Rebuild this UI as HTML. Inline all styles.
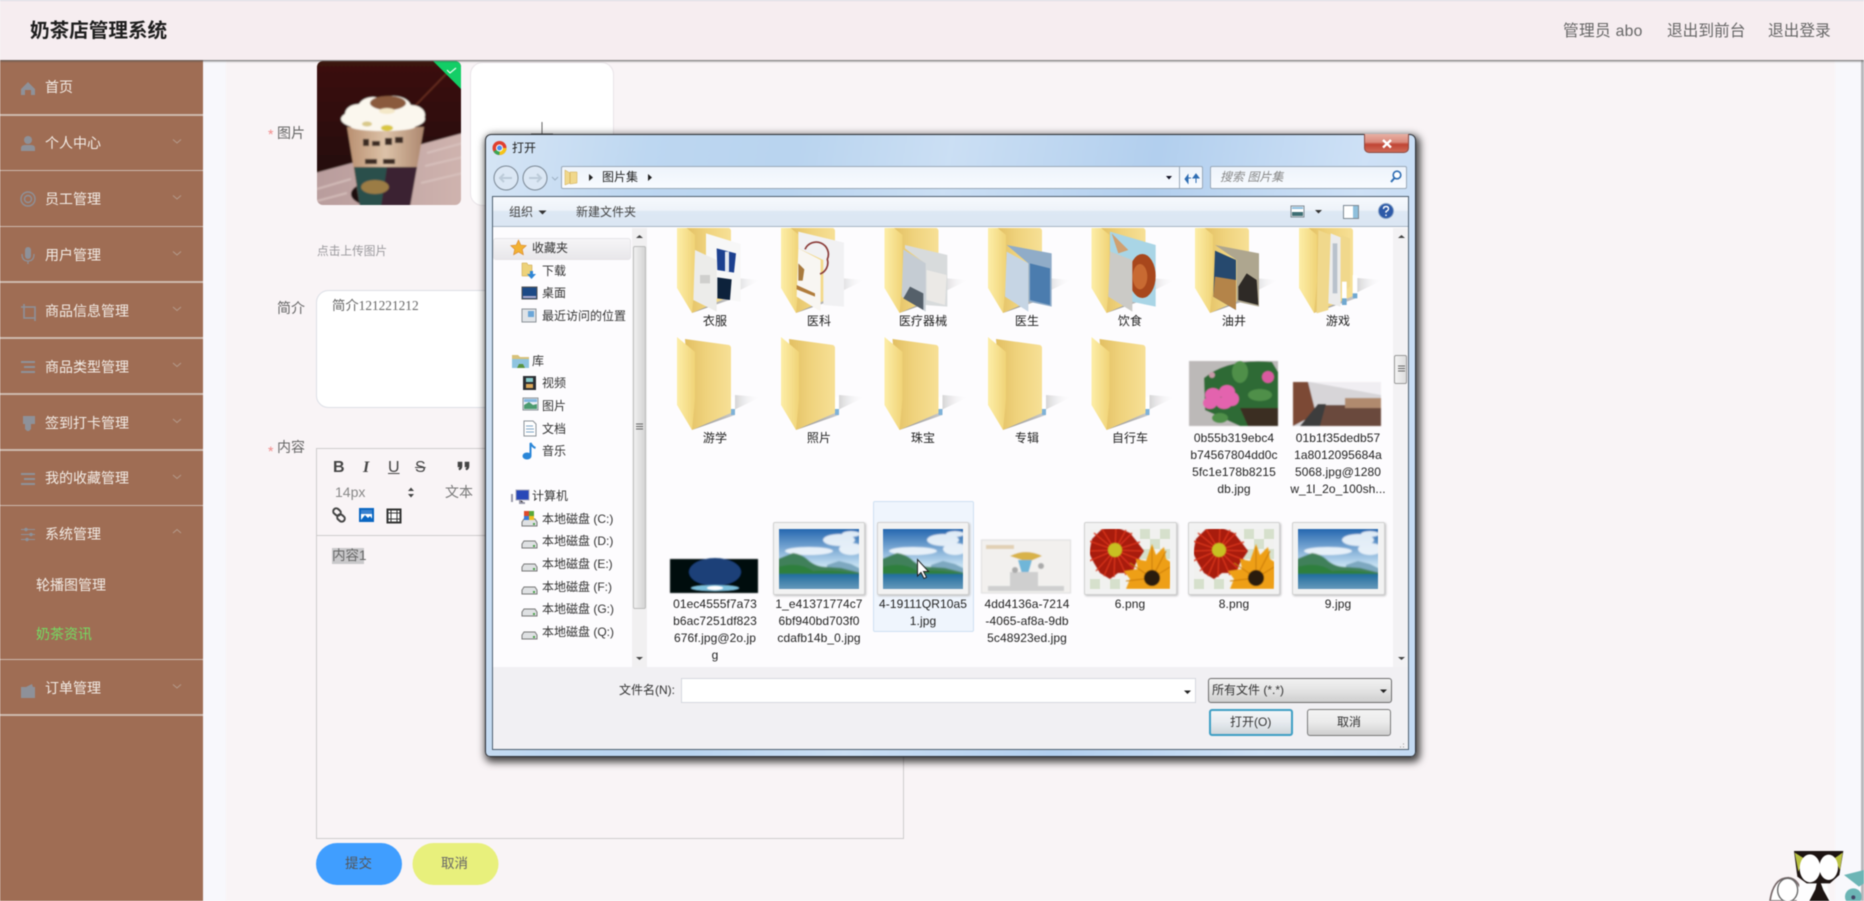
<!DOCTYPE html>
<html lang="zh"><head><meta charset="utf-8"><title>奶茶店管理系统</title>
<style>
*{box-sizing:border-box}
html,body{margin:0;padding:0}
body{width:1864px;height:901px;overflow:hidden;position:relative;background:#f8f8fc;font-family:"Liberation Sans","Noto Sans CJK SC",sans-serif;color:#333}
#root{position:absolute;left:0;top:0;width:1864px;height:901px;overflow:hidden;filter:blur(.45px)}
.a{position:absolute}
.t{position:absolute;white-space:nowrap}
.m{position:absolute;left:45px;white-space:nowrap;font-size:14px;line-height:20px;color:#f3ece6}
.s{position:absolute;left:0;width:203px;height:1.5px;background:#cdb9ae}
.n{position:absolute;white-space:nowrap;font-size:12px;line-height:16px;color:#333}
.l{position:absolute;width:104px;text-align:center;font-size:12px;line-height:17px;color:#222;word-break:break-all;white-space:normal;letter-spacing:.08px}
.frame{position:absolute;background:#f2f2f2;border:1px solid #d2d2d2;border-radius:2px;box-shadow:1px 1px 2px #bbb}
svg{position:absolute;left:0;top:0;overflow:visible}
</style></head><body><div id="root">

<!-- page -->
<div class="a" style="left:226px;top:60px;width:1609px;height:841px;background:#f9f4f6"></div>
<div class="a" style="left:1861px;top:60px;width:3px;height:841px;background:#b8b8bc"></div>
<div class="a" style="left:0;top:0;width:1864px;height:60px;background:#f6edf0;border-top:1px solid #d9d8e2;box-shadow:0 1px 2px #555;z-index:3"></div>
<div class="t" style="left:30px;top:17px;font-size:19.6px;line-height:28px;font-weight:700;color:#1d1d1d;z-index:4">奶茶店管理系统</div>
<div class="t" style="left:1563px;top:20.500px;font-size:15.7px;line-height:22px;color:#666;z-index:4;letter-spacing:.3px">管理员 abo</div>
<div class="t" style="left:1667px;top:20.500px;font-size:15.7px;line-height:22px;color:#666;z-index:4">退出到前台</div>
<div class="t" style="left:1768px;top:20.500px;font-size:15.7px;line-height:22px;color:#666;z-index:4">退出登录</div>

<!-- sidebar -->
<div class="a" style="left:0;top:60px;width:203px;height:841px;background:#9f6d54"></div>
<div class="s" style="top:114px"></div><div class="s" style="top:169.5px"></div><div class="s" style="top:225.5px"></div><div class="s" style="top:281px"></div><div class="s" style="top:337px"></div><div class="s" style="top:393px"></div><div class="s" style="top:449px"></div><div class="s" style="top:504.5px"></div><div class="s" style="top:658.5px"></div><div class="s" style="top:714px"></div>
<div class="m" style="top:77px">首页</div>
<div class="m" style="top:133px">个人中心</div>
<div class="m" style="top:189px">员工管理</div>
<div class="m" style="top:245px">用户管理</div>
<div class="m" style="top:301px">商品信息管理</div>
<div class="m" style="top:356.500px">商品类型管理</div>
<div class="m" style="top:412.500px">签到打卡管理</div>
<div class="m" style="top:468px">我的收藏管理</div>
<div class="m" style="top:524px">系统管理</div>
<div class="m" style="top:575px;left:36px">轮播图管理</div>
<div class="m" style="top:624px;left:36px;color:#74dc62">奶茶资讯</div>
<div class="m" style="top:678px">订单管理</div>

<svg width="1864" height="901" viewBox="0 0 1864 901">
 <defs>
  <filter id="b" x="-10%" y="-10%" width="120%" height="120%"><feGaussianBlur stdDeviation=".7"/></filter>
  <filter id="b2" x="-10%" y="-10%" width="120%" height="120%"><feGaussianBlur stdDeviation=".45"/></filter>
 </defs>
 <!-- sidebar icons -->
 <g fill="#8e9199" stroke="none">
  <path d="M28 82 L35 89 V95 H31 V90 H25 V95 H21 V89Z"/>
  <circle cx="28" cy="140" r="4"/><path d="M21 151v-3q0-3 4-3h6q4 0 4 3v3z"/>
  <g fill="none" stroke="#8e9199" stroke-width="1.4"><circle cx="28" cy="199" r="7"/><circle cx="28" cy="199" r="3.5"/></g>
  <rect x="25" y="247" width="6" height="12" rx="3"/><path d="M22 254q0 7 6 7t6-7M28 261v3" fill="none" stroke="#8e9199" stroke-width="1.3"/>
  <path d="M24 304v14h11M21 307h14v14" fill="none" stroke="#8e9199" stroke-width="1.6"/>
  <path d="M21 361h14v2H21zM24 366h11v2H24zM21 371h14v2H21z"/>
  <path d="M23 416h12v8h-4v5l-2 2h-2l-2-2v-5h-2z"/>
  <path d="M21 473h14v2H21zM24 478h11v2H24zM21 483h14v2H21z"/>
  <path d="M21 529h14v1H21zM21 534h14v1H21zM21 539h14v1H21z"/><circle cx="26" cy="529.5" r="1.7"/><circle cx="31" cy="534.5" r="1.7"/><circle cx="27" cy="539.5" r="1.7"/>
  <path d="M21 687l5 0 6-3 1 3h2v11H21z"/>
 </g>
 <g fill="none" stroke="#b59a8b" stroke-width="1">
  <path d="M173 139.5l4 3.5 4-3.5M173 195.5l4 3.5 4-3.5M173 251.5l4 3.5 4-3.5M173 307l4 3.5 4-3.5M173 363l4 3.5 4-3.5M173 419l4 3.5 4-3.5M173 475l4 3.5 4-3.5M173 533l4-3.5 4 3.5M173 684.5l4 3.5 4-3.5"/>
 </g>

 <!-- uploaded picture -->
 <g transform="translate(317,61)">
  <defs><clipPath id="ci"><rect width="144" height="144" rx="6"/></clipPath>
  <linearGradient id="cup" x1="0" y1="0" x2="1" y2="0"><stop offset="0" stop-color="#b98f70"/><stop offset=".5" stop-color="#dcc2a8"/><stop offset="1" stop-color="#ad876e"/></linearGradient>
  <linearGradient id="tb" x1="0" y1="0" x2="1" y2="0"><stop offset="0" stop-color="#b89c9c"/><stop offset="1" stop-color="#cfb3ae"/></linearGradient>
  <linearGradient id="wl" x1="0" y1="0" x2="0" y2="1"><stop offset="0" stop-color="#3c120d"/><stop offset=".6" stop-color="#2a0907"/><stop offset="1" stop-color="#1c0605"/></linearGradient></defs>
  <g clip-path="url(#ci)"><g filter="url(#b)">
   <rect x="-2" y="-2" width="148" height="148" fill="url(#wl)"/>
   <path d="M-2 112L146 72V146H-2Z" fill="url(#tb)"/>
   <path d="M110 92L146 82M108 105L146 96M104 122L146 112M0 128L34 118M0 140L30 132" stroke="#dcc6c2" stroke-width="2" fill="none" opacity=".7"/>
   <ellipse cx="62" cy="133" rx="28" ry="13" fill="#1c0908"/>
   <path d="M96 47L130 12" stroke="#6b2f20" stroke-width="1.6"/>
   <path d="M30 66H107L93 146H43Z" fill="url(#cup)"/>
   <path d="M37 106H100L93 146H43Z" fill="#3a2030"/>
   <path d="M37 106H70L64 146H43Z" fill="#2a4f4c"/>
   <ellipse cx="58" cy="126" rx="14" ry="7" fill="#9b7b44"/>
   <g fill="#3a2a22"><rect x="46" y="78" width="6" height="7"/><rect x="55" y="80" width="8" height="5"/><rect x="68" y="77" width="7" height="7"/><rect x="78" y="76" width="8" height="6"/><rect x="48" y="98" width="12" height="5"/><rect x="66" y="98" width="12" height="5"/></g>
   <g fill="#fbf7ee"><ellipse cx="66" cy="58" rx="42" ry="12"/><ellipse cx="42" cy="53" rx="14" ry="10"/><ellipse cx="56" cy="47" rx="15" ry="11"/><ellipse cx="76" cy="46" rx="18" ry="11"/><ellipse cx="94" cy="54" rx="14" ry="10"/><ellipse cx="66" cy="66" rx="32" ry="4"/></g>
   <ellipse cx="71" cy="42" rx="18" ry="7" fill="#8a5a3c"/><ellipse cx="70" cy="50" rx="8" ry="3" fill="#f4e8c8"/>
   <ellipse cx="70" cy="67" rx="6" ry="3" fill="#d9c63f"/><ellipse cx="50" cy="63" rx="5" ry="2.5" fill="#d9c98a"/>
  </g>
   <path d="M116 0H144V28Z" fill="#13ce66"/>
   <path d="M130 9l3 3 6-5" stroke="#e8fff0" fill="none" stroke-width="1.2"/>
  </g>
 </g>
 <!-- upload box -->
 <rect x="470.5" y="62.5" width="143" height="143" rx="12" fill="#fff" stroke="#e9e4e8"/>
 <path d="M542 122v22M531 134h22" stroke="#666" stroke-width="1"/>

 <!-- textarea -->
 <rect x="316.5" y="290.5" width="586" height="117" rx="12" fill="#fff" stroke="#dcdfe6"/>
 <!-- editor -->
 <rect x="316.5" y="448.5" width="587" height="390" fill="none" stroke="#cfcccd"/>
 <path d="M317 535.5H903" stroke="#cfcccd"/>
 <path d="M458 462h4v4q0 3-2.500 4l-.7-1.300q1.300-.7 1.200-1.700h-2zM465 462h4v4q0 3-2.500 4l-.7-1.300q1.300-.7 1.200-1.700h-2z" fill="#444" stroke="#444" stroke-width=".6"/>
 <path d="M408 491l3-3.500 3 3.500zM408 494l3 3.500 3-3.500z" fill="#444"/>
 <g fill="none" stroke="#444" stroke-width="2"><rect x="333" y="509" width="8" height="6" rx="3" transform="rotate(40 337 512)"/><rect x="337" y="515" width="8" height="6" rx="3" transform="rotate(40 341 518)"/></g>
 <rect x="360" y="509" width="13" height="12" fill="#fff" stroke="#0a66c2" stroke-width="2"/><path d="M361 520l4-5 3 3 2-2 3 4z" fill="#0a66c2"/><rect x="361" y="510" width="11" height="4" fill="#3b82cf"/>
 <rect x="387.500" y="509.500" width="13" height="13" fill="#fff" stroke="#333" stroke-width="2"/><path d="M387 513h14M387 519h14M391 509v14M397 509v14" stroke="#333" stroke-width="1"/>
 <rect x="332" y="548" width="32" height="16" fill="#c9c8ca"/>
 <rect x="316" y="843" width="86" height="42" rx="21" fill="#409eff"/>
 <rect x="412.500" y="843" width="86" height="42" rx="21" fill="#e8f07c"/>

 <!-- cat -->
 <g transform="translate(1600,780) scale(.33333)">
  <path d="M510 363q10-70 55-70 40 5 40 70z" fill="#fff" stroke="#77686a" stroke-width="5"/>
  <path d="M590 363l10-60h80l10 60z" fill="#fdfdfe"/>
  <path d="M582 213H730L718 285 690 310H620L592 290Z" fill="#1d1412"/>
  <path d="M584 218L612 235 595 275ZM728 218L703 235 720 270Z" fill="#b9c142"/>
  <ellipse cx="630" cy="265" rx="31" ry="42" fill="#fff"/><ellipse cx="686" cy="262" rx="28" ry="38" fill="#fff"/>
  <path d="M655 290l15 40 18 33h-60l18-35z" fill="#1d1412"/>
  <ellipse cx="563" cy="330" rx="30" ry="35" fill="#fff" stroke="#666" stroke-width="4"/>
  <path d="M732 285l60-15v40l-15 10z" fill="#6cb5b5"/><circle cx="760" cy="350" r="25" fill="#6cb5b5"/><circle cx="760" cy="352" r="6" fill="#446"/>
 </g>
</svg>

<!-- form text -->
<div class="t" style="left:268px;top:124px;font-size:14px;line-height:20px;color:#f28a8a">*</div>
<div class="t" style="left:277px;top:123px;font-size:14px;line-height:20px;color:#666">图片</div>
<div class="t" style="left:317px;top:243px;font-size:11.7px;line-height:17px;color:#9a999d">点击上传图片</div>
<div class="t" style="left:277px;top:298px;font-size:14px;line-height:20px;color:#666">简介</div>
<div class="t" style="left:332px;top:297px;font-family:'Liberation Serif','Noto Sans CJK SC',serif;font-size:13.33px;line-height:18px;color:#666">简介121221212</div>
<div class="t" style="left:268px;top:441px;font-size:14px;line-height:20px;color:#f28a8a">*</div>
<div class="t" style="left:277px;top:437px;font-size:14px;line-height:20px;color:#666">内容</div>
<div class="t" style="left:333px;top:458px;font-size:16px;font-weight:700;line-height:20px;color:#444">B</div>
<div class="t" style="left:363px;top:458px;font-size:16px;font-weight:700;font-style:italic;line-height:20px;color:#444;font-family:'Liberation Serif',serif">I</div>
<div class="t" style="left:388px;top:458px;font-size:16px;line-height:20px;color:#444;text-decoration:underline">U</div>
<div class="t" style="left:415px;top:458px;font-size:16px;line-height:20px;color:#444;text-decoration:line-through">S</div>
<div class="t" style="left:335px;top:482px;font-size:14px;line-height:20px;color:#888">14px</div>
<div class="t" style="left:445px;top:482px;font-size:14px;line-height:20px;color:#777">文本</div>
<div class="t" style="left:332px;top:546px;font-size:13.500px;line-height:20px;color:#666">内容1</div>
<div class="t" style="left:345px;top:854px;font-size:13.500px;line-height:20px;color:#555">提交</div>
<div class="t" style="left:441px;top:854px;font-size:13.500px;line-height:20px;color:#666">取消</div>

<!-- dialog -->
<div class="a" style="left:485px;top:134px;width:931px;height:623px;border-radius:6px 6px 5px 5px;border:1px solid #2c3036;box-shadow:2px 3px 8px 2px rgba(0,0,0,.75);background:linear-gradient(100deg,#d6e5f5 0%,#bdd7f1 16%,#b9d4ef 30%,#cbdff4 45%,#b2cfee 65%,#cee1f6 85%,#c3daf3 100%)"></div>
<div class="a" style="left:492px;top:196px;width:917px;height:554px;border:1px solid #4d5e6e;background:#fdfcfe"></div>
<div class="a" style="left:493px;top:197px;width:915px;height:30px;background:linear-gradient(#f6f9fd 0,#eef3f9 45%,#dde8f4 50%,#dbe6f3 100%);border-bottom:1px solid #a8b6c4"></div>
<div class="a" style="left:493px;top:667px;width:915px;height:82px;background:#f1f0f3"></div>
<div class="a" style="left:561px;top:166px;width:642px;height:23px;background:linear-gradient(#eef4fb,#f8fbff);border:1px solid #9aa9b9;border-radius:2px"></div>
<div class="a" style="left:1210px;top:166px;width:197px;height:23px;background:linear-gradient(#eef4fb,#f8fbff);border:1px solid #9aa9b9;border-radius:2px"></div>
<div class="a" style="left:1179px;top:167px;width:1px;height:21px;background:#9aa9b9"></div>
<div class="a" style="left:1364px;top:134px;width:45px;height:19px;border-radius:0 0 5px 5px;background:linear-gradient(#e8b0a4 0,#d98a7c 45%,#c04434 58%,#cf6a58 100%);border:1px solid #8c4c44;border-top:0"></div>
<div class="a" style="left:632px;top:228px;width:15px;height:439px;background:#f1f0f1"></div>
<div class="a" style="left:633px;top:246px;width:13px;height:363px;background:linear-gradient(90deg,#f0f0f0,#d4d4d4);border:1px solid #bcbcbc;border-radius:2px"></div>
<div class="a" style="left:1393px;top:228px;width:15px;height:439px;background:#f3f2f4"></div>
<div class="a" style="left:1394px;top:355px;width:13px;height:29px;background:linear-gradient(90deg,#f4f4f4,#dedede);border:1px solid #9a9a9a;border-radius:2px"></div>
<div class="a" style="left:493px;top:238px;width:138px;height:22px;background:linear-gradient(#f6f5f7,#e8e7ea);border:1px solid #e6e5e8;border-radius:3px"></div>
<div class="a" style="left:873px;top:501px;width:101px;height:131px;background:#eff5fd;border:1px solid #cfe0f2;border-radius:2px"></div>
<div class="a" style="left:681px;top:678px;width:515px;height:25px;background:#fff;border:1px solid #d5d8de"></div>
<div class="a" style="left:1208px;top:678px;width:184px;height:25px;border:1px solid #6c6c6c;border-radius:3px;background:linear-gradient(#f2f2f2,#e3e3e3 50%,#cfcfcf)"></div>
<div class="a" style="left:1209px;top:709px;width:84px;height:27px;border:2px solid #3e9fc4;border-radius:3px;background:linear-gradient(#f3f5f7,#e7ebef 50%,#cfd5da)"></div>
<div class="a" style="left:1307px;top:709px;width:84px;height:27px;border:1px solid #7a7a7a;border-radius:3px;background:linear-gradient(#f3f3f3,#ebebeb 50%,#cfcfcf)"></div>

<!-- thumb frames -->
<div class="frame" style="left:773px;top:522px;width:92px;height:73px"></div>
<div class="frame" style="left:877px;top:522px;width:92px;height:73px"></div>
<div class="frame" style="left:1084px;top:522px;width:93px;height:73px"></div>
<div class="frame" style="left:1188px;top:522px;width:92px;height:73px"></div>
<div class="frame" style="left:1292px;top:522px;width:93px;height:73px"></div>

<svg width="1864" height="901" viewBox="0 0 1864 901">
 <defs>
  <clipPath id="fa"><rect x="650" y="228" width="743" height="439"/></clipPath>
  <linearGradient id="fb" x1="0" y1="0" x2="1" y2="0"><stop offset="0" stop-color="#e2bf62"/><stop offset=".45" stop-color="#efd27c"/><stop offset="1" stop-color="#f7e096"/></linearGradient>
  <linearGradient id="ff" x1="0" y1="0" x2="1" y2="0"><stop offset="0" stop-color="#fdeea8"/><stop offset="1" stop-color="#f0d377"/></linearGradient>
  <linearGradient id="sh" x1="0" y1="0" x2="1" y2="0"><stop offset="0" stop-color="#8e8e8e"/><stop offset=".55" stop-color="#c4c4c4"/><stop offset="1" stop-color="#fdfcfe" stop-opacity="0"/></linearGradient>
  <linearGradient id="sky" x1="0" y1="0" x2="0" y2="1"><stop offset="0" stop-color="#1f63ad"/><stop offset=".6" stop-color="#c4e0f2"/></linearGradient>
  <linearGradient id="sea" x1="0" y1="0" x2="0" y2="1"><stop offset="0" stop-color="#1f6c9e"/><stop offset="1" stop-color="#6a9cbc"/></linearGradient>
  <symbol id="folder" viewBox="0 0 90 96" width="90" height="96" overflow="visible">
   <path d="M15 93L58 78V58L84 60Z" fill="url(#sh)"/>
   <path d="M8 2L52 8Q54 9 54 11V76L15 93Z" fill="url(#fb)"/>
   <rect x="54" y="60" width="4" height="18" fill="#fff"/><rect x="54" y="72" width="4" height="6" fill="#7fb2d8"/>
   <path d="M0 0L18 15V62L15 93L0 68Z" fill="url(#ff)"/>
  </symbol>
  <symbol id="land" viewBox="0 0 80 60" width="80" height="60">
   <g filter="url(#b)">
   <rect x="-1" y="-1" width="82" height="62" fill="url(#sky)"/>
   <g fill="#f2f8fd" opacity=".9"><ellipse cx="60" cy="11" rx="16" ry="6"/><ellipse cx="72" cy="20" rx="12" ry="6"/><ellipse cx="30" cy="22" rx="24" ry="4"/><ellipse cx="72" cy="5" rx="9" ry="3"/></g>
   <path d="M48 36L60 32 72 35 82 40V46H48Z" fill="#7da8c0"/>
   <path d="M-1 30L14 24Q22 25 28 30Q36 38 48 38L62 39 82 44V46H-1Z" fill="#40805a"/>
   <path d="M-1 38Q20 32 34 42Q50 40 82 45V47H-1Z" fill="#2f7f3e"/>
   <rect x="-1" y="45" width="82" height="16" fill="url(#sea)"/>
   </g>
  </symbol>
  <symbol id="flower" viewBox="0 0 80 60" width="80" height="60">
   <rect width="80" height="60" fill="#f1f1ef"/>
   <g fill="#d6e0cc"><rect x="50" width="10" height="10"/><rect x="70" width="10" height="10"/><rect x="60" y="10" width="10" height="10"/><rect x="50" y="20" width="10" height="10"/><rect x="70" y="20" width="10" height="10"/><rect y="50" width="10" height="10"/><rect x="20" y="50" width="10" height="10"/></g>
   <g filter="url(#b2)">
   <path d="M26-2L40 4 48 14 54 22 46 34 42 44 28 44 20 50 10 44 4 34 -1 24 2 10 12 0Z" fill="#a81a10"/>
   <g stroke="#d8341c" stroke-width="1.300"><path d="M25 21L4 4M25 21L0 22M25 21L6 42M25 21L24 48M25 21L44 40M25 21L52 22M25 21L42 4M25 21L26-1M25 21L12 0M25 21L-1 12M25 21L-1 32M25 21L14 47M25 21L36 46M25 21L50 31M25 21L50 13M25 21L36 1"/></g>
   <circle cx="25" cy="21" r="7" fill="#c8c020"/>
   <path d="M62 15L66 26 74 18 76 30 82 34 80 60H36L40 50 34 42 48 40 46 30 56 32Z" fill="#ee9f12"/>
   <g stroke="#c97a08" stroke-width="1"><path d="M62 49L62 18M62 49L76 22M62 49L80 38M62 49L40 34M62 49L36 52"/></g>
   <circle cx="62" cy="49" r="8" fill="#2b1a10"/>
   </g>
  </symbol>
 </defs>
 <g clip-path="url(#fa)">
  <use href="#folder" x="677" y="220"/><use href="#folder" x="781" y="220"/><use href="#folder" x="884.500" y="220"/><use href="#folder" x="988" y="220"/><use href="#folder" x="1091.500" y="220"/><use href="#folder" x="1195" y="220"/><use href="#folder" x="1299" y="220"/>
  <use href="#folder" x="677" y="337"/><use href="#folder" x="781" y="337"/><use href="#folder" x="884.500" y="337"/><use href="#folder" x="988" y="337"/><use href="#folder" x="1091.500" y="337"/>
  <g transform="translate(480,120) scale(.33333)" filter="url(#b2)">
   <path d="M678 340L782 372V545L678 530Z" fill="#f7f7f7"/>
   <path d="M710 385L768 400 762 458 712 450Z" fill="#1b3f8f"/><path d="M735 395h12v60h-12z" fill="#e4e8f0"/><path d="M712 472L755 478 750 540 712 535Z" fill="#10203a"/>
   <path d="M645 390L710 420V575L640 540Z" fill="#ececea"/>
   <path d="M660 465h30v25h-30z" fill="#cfcfcd"/>
   <path d="M955 335L1092 368V560L1030 555V420L955 385Z" fill="#f1f1f3"/>
   <path d="M955 385L1022 420V575L950 530Z" fill="#f8f6f2"/>
   <path d="M975 388a36 36 0 0 1 67 30a36 36 0 0 1-22 44" fill="none" stroke="#8a3a38" stroke-width="5"/>
   <path d="M955 430l18 18-5 34-13 0z" fill="#a87a3c"/><path d="M950 495l55 25v10l-55-22z" fill="#b07c3a"/>
   <path d="M1275 375L1402 405V560L1335 555V430L1275 385Z" fill="#d8dbdc"/>
   <path d="M1340 450L1400 465 1395 555 1340 540Z" fill="#ebe9e6"/>
   <path d="M1270 388L1337 430V575L1265 530Z" fill="#c5ccd3"/><path d="M1290 500L1330 520V570L1270 535Z" fill="#55606a"/>
  </g>
  <g transform="translate(960,120) scale(.33333)" filter="url(#b2)">
   <path d="M140 375L275 400V560L205 545V430Z" fill="#90acc8"/><path d="M210 430L270 445V555L210 540Z" fill="#4c7cae"/>
   <path d="M140 395L205 430V575L135 530Z" fill="#c6d5e4"/>
   <path d="M450 335L587 375V560L515 545V420L450 395Z" fill="#a9d5e6"/>
   <ellipse cx="547" cy="468" rx="40" ry="66" fill="#a8471e"/><ellipse cx="540" cy="470" rx="22" ry="38" fill="#c86a30"/><path d="M455 340l50 50-30 10z" fill="#d0a070"/>
   <path d="M450 395L517 420V575L445 530Z" fill="#cbcac6"/>
   <path d="M765 375L897 400V560L830 545V420Z" fill="#aea68f"/><path d="M835 500l25-40 30 20 5 75-60-15z" fill="#2f2a25"/>
   <path d="M765 392L828 420V570L760 530Z" fill="#26496e"/><path d="M765 470L828 480V570L760 530Z" fill="#b48448"/>
   <path d="M1075 330L1112 345 1105 570 1070 580Z" fill="#f0d88c"/>
   <path d="M1112 340L1142 352V560L1105 550Z" fill="#ececec"/><path d="M1118 370h14v150h-14z" fill="#b9c2cc"/>
   <path d="M1142 345L1170 355V500L1142 520Z" fill="#f0d88c"/>
   <rect x="1146" y="485" width="14" height="70" fill="#fff"/><rect x="1146" y="535" width="14" height="20" fill="#6fa8d0"/>
   <rect x="1178" y="465" width="14" height="70" fill="#fff"/><rect x="1178" y="520" width="14" height="15" fill="#6fa8d0"/>
  </g>
  <!-- pink flower -->
  <g filter="url(#b2)">
   <rect x="1189" y="361" width="89" height="65" fill="#bcb9b8"/>
   <path d="M1204 378Q1228 358 1272 362L1278 372V426H1240L1205 410Z" fill="#2f6a35"/>
   <path d="M1240 408h38v18h-30z" fill="#3a2d20"/>
   <g fill="#4f8f4a"><ellipse cx="1240" cy="372" rx="8" ry="11"/><ellipse cx="1260" cy="395" rx="12" ry="6"/><ellipse cx="1220" cy="418" rx="8" ry="5"/></g>
   <g fill="#e364ae"><ellipse cx="1213" cy="395" rx="8" ry="7"/><ellipse cx="1210" cy="403" rx="7" ry="6"/><ellipse cx="1227" cy="392" rx="8" ry="7"/><ellipse cx="1232" cy="399" rx="7" ry="7"/><ellipse cx="1224" cy="403" rx="8" ry="6"/></g>
   <circle cx="1268" cy="377" r="6" fill="#d95aa0"/><circle cx="1212" cy="375" r="3" fill="#c89aa8"/>
  </g>
  <!-- room -->
  <g filter="url(#b2)">
   <rect x="1293" y="382" width="88" height="44" fill="#d7d5d8"/>
   <path d="M1293 382h15l8 32 -23 12z" fill="#7c4a34"/>
   <path d="M1310 382L1381 395V382Z" fill="#f0eef2"/>
   <path d="M1322 405h59v21h-59l-8 0z" fill="#6a4a3c"/>
   <rect x="1345" y="398" width="36" height="10" fill="#b08a6e"/>
   <path d="M1300 426l18-22 8 0 -6 22z" fill="#3e3c3e"/>
  </g>
  <!-- row 3 -->
  <use href="#land" x="779" y="529"/><use href="#land" x="883" y="529"/><use href="#land" x="1298" y="529"/>
  <use href="#flower" x="1090" y="529"/><use href="#flower" x="1194" y="529"/>
  <g filter="url(#b2)">
   <rect x="670" y="559" width="88" height="34" fill="#06080f"/>
   <ellipse cx="715" cy="572" rx="26" ry="14" fill="#1a3f78"/>
   <ellipse cx="715" cy="588" rx="24" ry="3" fill="#7cc0dc"/><ellipse cx="715" cy="588" rx="8" ry="2" fill="#fff"/>
  </g>
  <g filter="url(#b2)">
   <rect x="981.500" y="540" width="89" height="53" fill="#f2f0ee" stroke="#ddd"/>
   <rect x="986" y="545" width="28" height="4" fill="#e2d0b4"/>
   <path d="M1010 556Q1026 548 1042 556L1028 562Z" fill="#d8b248"/><path d="M1018 560h14l-4 14h-6z" fill="#6fb6d8"/>
   <path d="M988 586h76v5H988zM1010 572h28v16h-28z" fill="#cfcfcf"/><circle cx="1015" cy="570" r="3" fill="#aaa"/><circle cx="1041" cy="566" r="3" fill="#aaa"/>
  </g>
  <!-- cursor -->
  <path d="M917.500 559.500V576L921 572.500 924 578.500 926.500 577.300 923.500 571.500H928.500Z" fill="#fff" stroke="#222" stroke-width="1"/>
 </g>

 <!-- scrollbar marks -->
 <path d="M636 238l3.500-3 3.500 3zM636 657l3.500 3 3.500-3zM1398 238l3.500-3 3.500 3zM1398 657l3.500 3 3.500-3z" fill="#444"/>
 <path d="M636 424h7M636 426.500h7M636 429h7M1398 366h7M1398 368.500h7M1398 371h7" stroke="#666"/>
 <!-- close X -->
 <path d="M1383 140l8 7.500M1391 140l-8 7.500" stroke="#fff" stroke-width="2.400"/>
 <!-- chrome icon -->
 <circle cx="499.500" cy="148" r="7" fill="#e0402f"/><path d="M499.500 148L493.500 151.500A7 7 0 0 0 499.500 155Z" fill="#3aa655"/><path d="M499.500 148V155A7 7 0 0 0 506.500 148Z" fill="#f5c518"/><circle cx="499.500" cy="148" r="3" fill="#4a8ef0" stroke="#fff"/>
 <!-- nav circles -->
 <g fill="#dbe7f4" stroke="#7a8794" stroke-width="1"><circle cx="506" cy="178" r="12"/><circle cx="535" cy="178" r="12"/></g>
 <g fill="none" stroke="#bccbd9" stroke-width="2"><path d="M512 178h-12m4-4l-4 4 4 4M529 178h12m-4-4l4 4-4 4"/></g>
 <path d="M552 177l3 3 3-3" fill="none" stroke="#9db0c4"/>
 <!-- address -->
 <path d="M565 170L570 173V183L565 185ZM570 172H577V183L570 184Z" fill="#f0d88c" stroke="#cfa94f" stroke-width=".5"/>
 <path d="M589 174l4 3.500-4 3.500zM648 174l4 3.500-4 3.500z" fill="#222"/>
 <path d="M1166 176h6l-3 3.500z" fill="#112"/>
 <path d="M1185 179l3-4v8zM1196 174l3 4h-6zM1188 178h3M1196 178v5" fill="#2e6db3" stroke="#2e6db3"/>
 <circle cx="1397" cy="175" r="3.800" fill="#fff" stroke="#2e6db3" stroke-width="1.600"/><path d="M1394.500 178l-3.500 4" stroke="#2e6db3" stroke-width="2"/>
 <!-- toolbar -->
 <path d="M538.500 210.500h8l-4 4z" fill="#333"/>
 <rect x="1291" y="206" width="13" height="11" fill="#fff" stroke="#7e8a94"/><path d="M1292 212h11v4h-11z" fill="#3e6e74"/><path d="M1292 207h11v2h-11z" fill="#8ec0e0"/>
 <path d="M1315 210h7l-3.500 3.500z" fill="#333"/>
 <rect x="1343.500" y="205.500" width="15" height="13" fill="#fff" stroke="#7e8a94"/><rect x="1353" y="206" width="5" height="12" fill="#8fc0dc"/>
 <circle cx="1386" cy="211" r="7.500" fill="#2d5aa8" stroke="#8fa8c8"/>
 <path d="M1383.500 209q0-2.500 2.500-2.500t2.500 2.200q0 1.500-2.500 2.800v1.300M1386 214.500v1.500" stroke="#fff" fill="none" stroke-width="1.400"/>
 <!-- nav pane icons -->
 <path d="M518.500 240l2.300 5 5.500.6-4 3.700 1.100 5.500-4.900-2.800-4.900 2.800 1.100-5.500-4-3.700 5.500-.6z" fill="#f2b234" stroke="#d8842a" stroke-width=".6"/>
 <path d="M522 263h5l1 2h4v11h-10z" fill="#edd27a" stroke="#c49b3f" stroke-width=".5"/><path d="M530 271h3v3h3l-4.500 5-4.500-5h3z" fill="#2f86d6"/>
 <rect x="522" y="287" width="15" height="12" fill="#1c4a86" stroke="#555"/><path d="M523 296h13v2h-13z" fill="#aac"/>
 <rect x="522" y="309" width="14" height="13" fill="#dfe3e7" stroke="#8c9298"/><rect x="528" y="311" width="6" height="6" fill="#6aa6d8"/>
 <path d="M512 355h6l2 2h9v2h-17z" fill="#d8c27a"/><path d="M512 359h17v9h-17z" fill="#8fc4e0"/><path d="M517 368l2-4h4l2 4z" fill="#5a9440"/>
 <rect x="523" y="376" width="13" height="14" fill="#2c2f33"/><rect x="526" y="378" width="7" height="4" fill="#8cc"/><rect x="526" y="384" width="7" height="4" fill="#dca85a"/>
 <rect x="523" y="398" width="15" height="12" fill="#e8eef3" stroke="#8c9298"/><path d="M524 405l5-3 4 3 4-1v5h-13z" fill="#4b9b70"/><rect x="524" y="399" width="13" height="3" fill="#84b8e0"/>
 <path d="M524 421h9l3 3v12h-12z" fill="#fff" stroke="#8c9298"/><path d="M526 426h7M526 429h8M526 432h8" stroke="#7ea4c6"/>
 <ellipse cx="527" cy="456" rx="4.500" ry="3.500" fill="#2a86d8"/><path d="M530.500 456V443q2 4 5 5" fill="none" stroke="#2a86d8" stroke-width="2"/>
 <rect x="516" y="490" width="13" height="10" fill="#2848b8" stroke="#aab"/><path d="M512 494v8M520 500v3h5" stroke="#99a" stroke-width="2"/>
 <g fill="#dfe1e3" stroke="#777"><path d="M522 522l2-3h11l2 3v4h-15z"/><path d="M522 544l2-3h11l2 3v4h-15z"/><path d="M522 567l2-3h11l2 3v4h-15z"/><path d="M522 590l2-3h11l2 3v4h-15z"/><path d="M522 612l2-3h11l2 3v4h-15z"/><path d="M522 635l2-3h11l2 3v4h-15z"/></g>
 <g fill="#4aa04a"><rect x="533" y="523" width="2" height="2"/><rect x="533" y="545" width="2" height="2"/><rect x="533" y="568" width="2" height="2"/><rect x="533" y="591" width="2" height="2"/><rect x="533" y="613" width="2" height="2"/><rect x="533" y="636" width="2" height="2"/></g>
 <rect x="524" y="511" width="5" height="5" fill="#e04a2a"/><rect x="529" y="511" width="5" height="5" fill="#5aa83a"/><rect x="524" y="516" width="5" height="4" fill="#3a7ad8"/><rect x="529" y="516" width="5" height="4" fill="#f0c020"/>
 <!-- bottom carets -->
 <path d="M1184 690.500h7l-3.500 3.500zM1380 689.500h7l-3.500 3.500z" fill="#222"/>
 <!-- grip -->
 <path d="M1403 747h1M1400 747h1M1403 744h1" stroke="#999"/>
</svg>

<!-- dialog text -->
<div class="t" style="left:512px;top:140px;font-size:12px;line-height:16px;color:#222">打开</div>
<div class="t" style="left:602px;top:169px;font-size:12px;line-height:16px;color:#222">图片集</div>
<div class="t" style="left:1220px;top:169px;font-size:12px;line-height:16px;color:#888;font-style:italic">搜索 图片集</div>
<div class="t" style="left:509px;top:204px;font-size:12px;line-height:16px;color:#444">组织</div>
<div class="t" style="left:576px;top:204px;font-size:12px;line-height:16px;color:#444">新建文件夹</div>
<div class="n" style="left:532px;top:240px">收藏夹</div>
<div class="n" style="left:542px;top:263px">下载</div>
<div class="n" style="left:542px;top:285px">桌面</div>
<div class="n" style="left:542px;top:308px">最近访问的位置</div>
<div class="n" style="left:532px;top:353px">库</div>
<div class="n" style="left:542px;top:375px">视频</div>
<div class="n" style="left:542px;top:398px">图片</div>
<div class="n" style="left:542px;top:421px">文档</div>
<div class="n" style="left:542px;top:443px">音乐</div>
<div class="n" style="left:532px;top:488px">计算机</div>
<div class="n" style="left:542px;top:511px">本地磁盘 (C:)</div>
<div class="n" style="left:542px;top:533px">本地磁盘 (D:)</div>
<div class="n" style="left:542px;top:556px">本地磁盘 (E:)</div>
<div class="n" style="left:542px;top:579px">本地磁盘 (F:)</div>
<div class="n" style="left:542px;top:601px">本地磁盘 (G:)</div>
<div class="n" style="left:542px;top:624px">本地磁盘 (Q:)</div>

<div class="l" style="left:663px;top:313px">衣服</div>
<div class="l" style="left:767px;top:313px">医科</div>
<div class="l" style="left:871px;top:313px">医疗器械</div>
<div class="l" style="left:975px;top:313px">医生</div>
<div class="l" style="left:1078px;top:313px">饮食</div>
<div class="l" style="left:1182px;top:313px">油井</div>
<div class="l" style="left:1286px;top:313px">游戏</div>
<div class="l" style="left:663px;top:430px">游学</div>
<div class="l" style="left:767px;top:430px">照片</div>
<div class="l" style="left:871px;top:430px">珠宝</div>
<div class="l" style="left:975px;top:430px">专辑</div>
<div class="l" style="left:1078px;top:430px">自行车</div>
<div class="l" style="left:1182px;top:430px">0b55b319ebc4<br>b74567804dd0c<br>5fc1e178b8215<br>db.jpg</div>
<div class="l" style="left:1286px;top:430px">01b1f35dedb57<br>1a8012095684a<br>5068.jpg@1280<br>w_1l_2o_100sh...</div>
<div class="l" style="left:663px;top:596px">01ec4555f7a73<br>b6ac7251df823<br>676f.jpg@2o.jp<br>g</div>
<div class="l" style="left:767px;top:596px">1_e41371774c7<br>6bf940bd703f0<br>cdafb14b_0.jpg</div>
<div class="l" style="left:871px;top:596px">4-19111QR10a5<br>1.jpg</div>
<div class="l" style="left:975px;top:596px">4dd4136a-7214<br>-4065-af8a-9db<br>5c48923ed.jpg</div>
<div class="l" style="left:1078px;top:596px">6.png</div>
<div class="l" style="left:1182px;top:596px">8.png</div>
<div class="l" style="left:1286px;top:596px">9.jpg</div>

<div class="n" style="left:619px;top:682px">文件名(N):</div>
<div class="n" style="left:1212px;top:682px;color:#333">所有文件 (*.*)</div>
<div class="n" style="left:1230px;top:714px">打开(O)</div>
<div class="n" style="left:1337px;top:714px">取消</div>

</div></body></html>
